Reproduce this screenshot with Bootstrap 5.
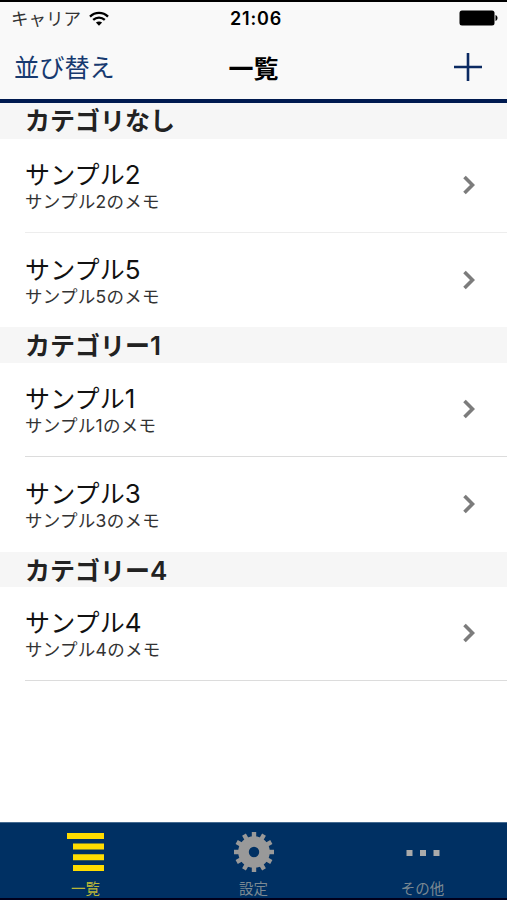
<!DOCTYPE html>
<html lang="ja">
<head>
<meta charset="utf-8">
<meta name="viewport" content="width=device-width, initial-scale=1">
<title>一覧</title>
<link href="https://cdn.jsdelivr.net/npm/bootstrap@5.3.0/dist/css/bootstrap.min.css" rel="stylesheet">
<style>
  body { font-family: Inter, "Noto Sans CJK JP", sans-serif; color: #111; line-height: 1; overflow: hidden; }
  svg { display: block; flex: none; }
  .screen { height: 900px; border-top: 2px solid #000; border-bottom: 2px solid #00001c; }
  .topbar { height: 101px; background: #f9f9f9; border-bottom: 4px solid #001a50; }
  .status { height: 32px; font-size: 17.5px; padding: 0 9px 0 11px; }
  .carrier { color: #333; }
  .carrier span { padding-top: 1px; }
  .clock { font-weight: 600; letter-spacing: .8px; font-size: 18px; padding: 2px 0 0 3px; }
  .titlebar { height: 65px; padding: 0 25px 0 14px; font-size: 25.2px; }
  .sort-link { color: #173a70; }
  .titlebar .col-auto { font-size: 25px; padding: 4px 0 0 11px; }
  .sort-col { padding-top: 5px; }
  .section-head { height: 35.5px; padding-left: 25px; background: #f6f6f6; font-size: 25px; line-height: 37px; font-weight: 600; color: #222; }
  .section-head b, .entry-title b { font-weight: inherit; font-size: 26px; }
  .entry { height: 94.4px; margin-left: 25px; padding-right: 32px; }
  .entry svg { margin-bottom: 1px; }
  .entry.border-bottom { border-color: #dcdcdc !important; }
  .entry.faint { border-color: #ededed !important; }
  .entry-title { font-size: 25px; line-height: 30px; margin-top: 3px; letter-spacing: .15px; }
  .entry-note { font-size: 17.5px; line-height: 24px; letter-spacing: .28px; color: #333; }
  .tabs { height: 76px; background: #003063; border-top: 1px solid #456b91; font-size: 14.5px; }
  .tab-item { color: #7b8992; padding-top: 9px; }
  .tab-item.on { color: #b9b638; }
  .tab-item span { margin-top: 9px; line-height: 16px; }
  .tab-item.on span { padding-left: 2px; }
</style>
<script src="https://cdn.jsdelivr.net/npm/bootstrap@5.3.0/dist/js/bootstrap.bundle.min.js"></script>
</head>
<body class="bg-white">
<div class="screen d-flex flex-column">
  <header class="topbar flex-shrink-0">
    <div class="status row g-0 align-items-center">
      <div class="col d-flex align-items-center gap-2 carrier"><span>キャリア</span>
        <svg width="20" height="15" viewBox="0 0 20 15" fill="none" stroke="#000" stroke-width="2.3"><path d="M1 5.600C6 .7 14 .7 19 5.600M4.200 8.900c3.300-3.100 8.300-3.100 11.600 0"/><path d="M6.900 11.600c1.800-1.600 4.400-1.600 6.200 0L10 14.800z" fill="#000" stroke="none"/></svg>
      </div>
      <div class="col-auto clock text-black">21:06</div>
      <div class="col d-flex justify-content-end">
        <svg width="39" height="16" viewBox="0 0 39 16"><rect x=".5" y=".5" width="35" height="15" rx="2.5"/><path d="M36.500 5c2.700.7 2.700 5.300 0 6z"/></svg>
      </div>
    </div>
    <div class="titlebar row g-0 align-items-center">
      <div class="col sort-col"><a href="#" class="sort-link text-decoration-none">並び替え</a></div>
      <h1 class="col-auto m-0 fw-bold text-black">一覧</h1>
      <div class="col d-flex justify-content-end"><svg width="28" height="28" viewBox="0 0 28 28" stroke="#0b2a62" stroke-width="2.6"><path d="M0 14h28M14 0v28"/></svg></div>
    </div>
  </header>
  <main class="flex-grow-1">
    <h2 class="section-head m-0">カテゴリなし</h2>
    <div class="entry faint border-bottom d-flex align-items-center justify-content-between"><div><div class="entry-title">サンプル<b>2</b></div><div class="entry-note">サンプル2のメモ</div></div><svg width="12" height="20" viewBox="0 0 12 20" fill="none" stroke="#7c7c7c" stroke-width="3.6"><path d="M1.500 2 9.500 10l-8 8"/></svg></div>
    <div class="entry d-flex align-items-center justify-content-between"><div><div class="entry-title">サンプル<b>5</b></div><div class="entry-note">サンプル5のメモ</div></div><svg width="12" height="20" viewBox="0 0 12 20" fill="none" stroke="#7c7c7c" stroke-width="3.6"><path d="M1.500 2 9.500 10l-8 8"/></svg></div>
    <h2 class="section-head m-0">カテゴリー<b>1</b></h2>
    <div class="entry border-bottom d-flex align-items-center justify-content-between"><div><div class="entry-title">サンプル<b>1</b></div><div class="entry-note">サンプル1のメモ</div></div><svg width="12" height="20" viewBox="0 0 12 20" fill="none" stroke="#7c7c7c" stroke-width="3.6"><path d="M1.500 2 9.500 10l-8 8"/></svg></div>
    <div class="entry d-flex align-items-center justify-content-between"><div><div class="entry-title">サンプル<b>3</b></div><div class="entry-note">サンプル3のメモ</div></div><svg width="12" height="20" viewBox="0 0 12 20" fill="none" stroke="#7c7c7c" stroke-width="3.6"><path d="M1.500 2 9.500 10l-8 8"/></svg></div>
    <h2 class="section-head m-0">カテゴリー<b>4</b></h2>
    <div class="entry border-bottom d-flex align-items-center justify-content-between"><div><div class="entry-title">サンプル<b>4</b></div><div class="entry-note">サンプル4のメモ</div></div><svg width="12" height="20" viewBox="0 0 12 20" fill="none" stroke="#7c7c7c" stroke-width="3.6"><path d="M1.500 2 9.500 10l-8 8"/></svg></div>
  </main>
  <nav class="tabs row g-0 flex-shrink-0">
    <a href="#" class="tab-item on col d-flex flex-column align-items-center text-decoration-none">
      <svg width="40" height="40" viewBox="0 0 40 40" fill="#ffdc00"><path d="M2 1h37v6H2zM8 11.500h31v6H8zM8 22.300h31v6H8zM8 33h31v6H8z"/></svg><span>一覧</span></a>
    <a href="#" class="tab-item col d-flex flex-column align-items-center text-decoration-none">
      <svg width="40" height="40" viewBox="0 0 40 40" fill="none" stroke="#999" stroke-width="4.4"><path d="M20 0v40M0 20h40M10 2.680l20 34.640M30 2.680L10 37.320M2.680 10l34.640 20M2.680 30l34.640-20"/><circle cx="20" cy="20" r="10.500" fill="#003063" stroke-width="10.600"/></svg><span>設定</span></a>
    <a href="#" class="tab-item col d-flex flex-column align-items-center text-decoration-none">
      <svg width="40" height="40" viewBox="0 0 40 40" fill="#aaa"><path d="M3.500 18h6v6h-6zM17 18h6v6h-6zM30.500 18h6v6h-6z"/></svg><span>その他</span></a>
  </nav>
</div>
</body>
</html>
